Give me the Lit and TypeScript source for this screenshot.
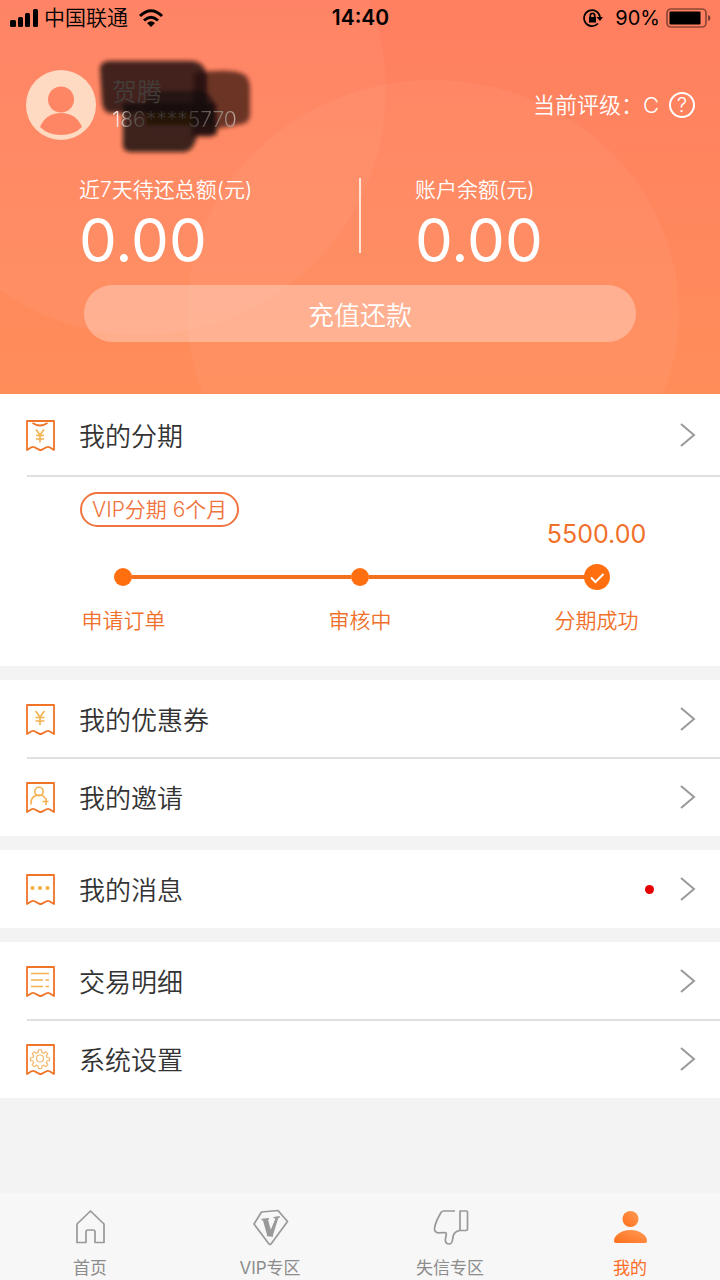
import { LitElement, html, svg, css, nothing } from "lit";
import { customElement, property } from "lit/decorators.js";
import { classMap } from "lit/directives/class-map.js";

const rowGlyphs = {
  installment: svg`<path class="edge" d="M7.500 4q7.500 5 15 0"/><path class="inner" d="M11 10.500l4 5.500 4-5.500M15 16v7.500M11 16.500h8M11 20h8"/>`,
  coupon: svg`<path class="inner" d="M10.500 8l4.500 6 4.500-6M15 14v8M10.500 14.500h9M10.500 18h9"/>`,
  invite: svg`<circle class="inner" cx="14" cy="10.500" r="4.200"/><path class="inner" d="M6 23.500v-1.500c0-9 12-10 14-4.500M21 17v7M17.500 20.500h6"/>`,
  message: svg`<g class="dots"><circle cx="7.500" cy="15" r="2"/><circle cx="15" cy="15" r="2"/><circle cx="22.500" cy="15" r="2"/></g>`,
  ledger: svg`<path class="inner" d="M6 8.500h18M6 15h12M20.500 15h3.500M6 21.500h12M20.500 21.500h3.500"/>`,
  settings: svg`<circle class="thin" cx="15" cy="15.500" r="3.500"/><path class="thin" d="M13.500 7h3l.5 2.500 1.700.7 2.100-1.500 2 2-1.500 2.100.7 1.700 2.500.5v2.500l-2.500.5-.7 1.700 1.500 2.100-2 2-2.100-1.500-1.700.7-.5 2.500h-3l-.5-2.500-1.700-.7-2.100 1.500-2-2 1.500-2.100-.7-1.700-2.500-.5v-2.500l2.500-.5.7-1.700-1.500-2.100 2-2 2.100 1.500 1.700-.7z"/>`,
};

const tabGlyphs = {
  home: svg`<path d="M5 16 18.500 3 32 16v18.500h-9V24q0-2-2-2h-5q-2 0-2 2v10.500H5z"/>`,
  vip: svg`<path d="M9.500 4 26 2.500 35.500 13.500 19 36q-1 1-2 0L2 16z"/><path class="solid" d="M9.500 10.800l7.500-.8v1.500l-1 .3 2.800 10 4.700-11.300-2-.3V9l6.500-1-.3 1.500-1.500.7L21 27v1.700l-6-.4v-1.500l-4-14.300-1.500-.3z"/>`,
  credit: svg`<path d="M23 3H12q-2 0-3 1.500-5.500 9-6.500 16 0 4 4 4.300l6.500-.3q1.500 0 1.300 2l-1 5q0 4.500 3.700 4.500 3 0 3.500-4 .5-9 7.500-9.500h6q1.500 0 1.500-1.500V4q0-1-1-1h-6.500v19"/>`,
  mine: svg`<defs><linearGradient id="mineFill" x1="0" y1="1" x2="1" y2="0"><stop offset="0" stop-color="#ff6f1c"/><stop offset="1" stop-color="#ff9a55"/></linearGradient></defs><g class="mine"><circle cx="18.500" cy="11" r="8"/><path d="M2 33q0-4 4-7 5-4 12.500-4T31 26q4 3 4 7 0 2-2 2H4q-2 0-2-2z"/></g>`,
};

@customElement("menu-row")
class MenuRow extends LitElement {
  @property() label = "";
  @property() icon = "coupon";
  @property({ type: Boolean }) unread = false;
  @property({ type: Boolean, reflect: true }) divided = false;

  static styles = css`
    :host { display: block; position: relative; }
    :host([divided])::after {
      content: ""; position: absolute; left: 27px; right: 0; bottom: -1px;
      height: 2px; background: #e0e0e0;
    }
    .row {
      display: flex; align-items: center; box-sizing: border-box;
      min-height: 78px; padding: 0 24px 0 25px;
      color: #333; text-decoration: none;
    }
    .glyph { width: 30px; height: 32px; flex: none; fill: none; }
    .edge { stroke: #f07428; stroke-width: 1.800; stroke-linejoin: round; }
    .inner { stroke: #f5b04c; stroke-width: 1.600; }
    .thin { stroke: #f5b76a; stroke-width: 1.200; }
    .dots { fill: #f5ab3d; }
    .label { flex: 1; margin-left: 24px; padding-top: 3px; font-size: 26px; line-height: 36px; }
    .unread { width: 9px; height: 9px; border-radius: 50%; background: #e60000; margin-right: 25px; }
    .chevron { width: 17px; height: 26px; fill: none; stroke: #999; stroke-width: 2; }
  `;

  render() {
    return html`<a class="row" href="#${this.icon}">
      <svg class="glyph" viewBox="0 0 30 32" aria-hidden="true">
        <path class="edge" d="M2 2h27v29l-4.500-2.700q-1.500-.8-3 0L17 30.600q-1.500.8-3 0l-4.500-2.300q-1.500-.8-3 0L2 31z"/>
        ${rowGlyphs[this.icon]}
      </svg>
      <span class="label">${this.label}</span>
      ${this.unread ? html`<span class="unread" role="img" aria-label="未读"></span>` : nothing}
      <svg class="chevron" viewBox="0 0 17 26" aria-hidden="true"><path d="M2 2l13 11L2 24"/></svg>
    </a>`;
  }
}

@customElement("status-bar")
class StatusBar extends LitElement {
  static styles = css`
    :host {
      display: grid; grid-template-columns: 1fr auto 1fr; align-items: center;
      height: 36px; padding: 0 9px 0 10px; color: #000; font-size: 20px; line-height: 36px;
    }
    .side { display: flex; align-items: center; }
    .end { justify-content: flex-end; }
    .carrier { font-size: 21px; margin: 0 10px 0 6px; }
    .time { font-size: 21px; font-weight: 600; }
    .percent { margin: 0 6px 0 12px; font-weight: 400; }
    svg { display: block; }
  `;

  render() {
    return html`
      <div class="side">
        <svg width="28" height="18" viewBox="0 0 28 18" aria-hidden="true">
          <rect x="0" y="11" width="6" height="7" rx="1.500"/><rect x="8" y="8" width="5" height="10" rx="1.500"/>
          <rect x="15" y="4" width="5" height="14" rx="1.500"/><rect x="23" y="0" width="5" height="18" rx="1.500"/>
        </svg>
        <span class="carrier">中国联通</span>
        <svg width="26" height="18" viewBox="0 0 26 18" fill="none" stroke="#000" stroke-width="3" aria-hidden="true">
          <path d="M2 7Q13-3.500 24 7M6 11.500q7-6.500 14 0"/><path d="M9 14q4-3.500 8 0l-4 4z" fill="#000" stroke="none"/>
        </svg>
      </div>
      <span class="time">14:40</span>
      <div class="side end">
        <svg width="20" height="18" viewBox="0 0 20 18" fill="none" stroke="#000" stroke-width="1.700" aria-hidden="true">
          <path d="M15 14.500A8 8 0 1 1 17 8"/><path d="M13.500 8H20l-3 4z" fill="#000" stroke="none"/>
          <rect x="6" y="8" width="7" height="5.500" fill="#000" stroke="none"/><path d="M7.300 8V6.500a2.200 2.200 0 0 1 4.400 0V8"/>
        </svg>
        <span class="percent">90%</span>
        <svg width="45" height="20" viewBox="0 0 45 20" aria-hidden="true">
          <rect x="1" y="1" width="39" height="18" rx="4" fill="none" stroke="#000" stroke-opacity=".45" stroke-width="1.700"/>
          <rect x="3.500" y="3.500" width="31" height="13" rx="1"/><path d="M42 7q2.500.5 2.500 3T42 13z" fill-opacity=".5"/>
        </svg>
      </div>`;
  }
}

@customElement("app-root")
class AppRoot extends LitElement {
  static styles = css`
    :host {
      display: flex; flex-direction: column; min-height: 100vh; background: #f3f3f3; color: #333;
      font-family: Inter, "Noto Sans CJK SC", sans-serif; font-weight: 350;
    }
    .hero {
      position: relative; overflow: hidden; color: #fff; padding-bottom: 52px;
      background: linear-gradient(#ff7f61, #ff8d5a);
    }
    .rings { position: absolute; inset: 0; width: 100%; height: 100%; fill: #fff; fill-opacity: .045; }
    .front { position: relative; }
    .profile { display: flex; align-items: center; padding: 34px 25px 0 26px; }
    .avatar { display: block; width: 70px; height: 70px; }
    .identity { position: relative; margin-left: 16px; flex: 1; }
    .name { position: relative; font-size: 25px; line-height: 30px; color: #433d3b; }
    .phone {
      position: relative; width: max-content; font-size: 21px; line-height: 26px; color: transparent;
      background: linear-gradient(90deg, #f4e4dc 6%, #6b5d58 14%, #3a3230 30%, #3a3230 60%, #6e605c 78%, #c0a8a0);
      background-clip: text; -webkit-background-clip: text;
    }
    .scribble { position: absolute; left: -16px; top: -20px; width: 164px; height: 106px; }
    .grade { display: flex; align-items: center; font-size: 22px; line-height: 30px; }
    .help {
      width: 26px; height: 26px; margin-left: 10px; padding: 0; border: 2px solid #fff; border-radius: 50%;
      background: none; color: #fff; font: inherit; font-size: 20px; line-height: 22px;
    }
    .totals { display: grid; grid-template-columns: 280px 2px 1fr; padding: 34px 25px 0 79px; }
    .total { display: flex; flex-direction: column; }
    .split { background: #ffe4d8; height: 75px; margin-top: 4px; }
    .split + .total { padding-left: 54px; }
    .caption { font-size: 21px; line-height: 32px; }
    .sum { font-size: 60px; line-height: 68px; font-weight: 400; }
    .repay {
      display: block; width: calc(100% - 168px); height: 57px; margin: 11px auto 0; border: 0; border-radius: 29px;
      background: rgba(255, 255, 255, .3); color: #fff; font: inherit; font-size: 26px; line-height: 57px; padding: 2px 0 0;
    }
    .card { background: #fff; }
    .card + .card { margin-top: 14px; }
    .lead { display: block; padding: 2px 0; }
    .plan { padding: 16px 80px 30px; color: #f0702a; }
    .badge {
      display: inline-block; box-sizing: border-box; height: 35px; padding: 0 10px; border: 2px solid #ef7440;
      border-radius: 18px; font-size: 21px; line-height: 32px; color: #ef7440;
    }
    .steps { display: grid; grid-template-columns: 87px 1fr 87px; margin: -10px 0 0; padding: 0; list-style: none; }
    .amount { grid-column: 3; justify-self: center; font-size: 25px; line-height: 34px; font-weight: 400; }
    .track { display: flex; align-items: center; grid-column: 1 / -1; padding: 13px 30px 0 34px; height: 26px; }
    .dot { width: 18px; height: 18px; border-radius: 50%; background: #ff6f10; }
    .bar { flex: 1; height: 4px; background: #f4701f; }
    .done { display: block; width: 26px; height: 26px; margin-left: -4px; }
    .step { text-align: center; font-size: 21px; line-height: 30px; margin-top: 16px; white-space: nowrap; }
    .tabs {
      display: grid; grid-template-columns: repeat(4, 1fr); margin-top: auto; height: 87px; background: #f7f7f7;
    }
    .tab {
      display: flex; flex-direction: column; align-items: center; padding-top: 15px;
      color: #8c8c8c; font-size: 17px; line-height: 24px; font-weight: 400; text-decoration: none;
    }
    .tab svg { width: 37px; height: 38px; margin-bottom: 10px; fill: none; stroke: #999; stroke-width: 1.700; stroke-linejoin: round; }
    .tab .solid { fill: #999; stroke: none; }
    .mine { fill: url(#mineFill); stroke: none; }
    .tab.current { color: #ff6c25; }
  `;

  private tabs = [
    { id: "home", label: "首页" },
    { id: "vip", label: "VIP专区" },
    { id: "credit", label: "失信专区" },
    { id: "mine", label: "我的" },
  ];

  render() {
    return html`
      <header class="hero">
        <svg class="rings" viewBox="0 0 720 394" preserveAspectRatio="xMidYMin slice" aria-hidden="true">
          <circle cx="141" cy="90" r="245"/><ellipse cx="433" cy="312" rx="246" ry="232"/>
        </svg>
        <div class="front">
          <status-bar></status-bar>
          <div class="profile">
            <svg class="avatar" viewBox="0 0 70 70" role="img" aria-label="头像">
              <circle cx="35" cy="35" r="35" fill="#ffdac2"/><circle cx="35" cy="29.500" r="13" fill="#ff8665"/>
              <path d="M14 57q6-14 21-14t21 14q-8 8-21 8t-21-8z" fill="#ff8665"/>
            </svg>
            <div class="identity">
              <svg class="scribble" viewBox="0 0 164 106" aria-hidden="true">
                <defs><filter id="soft" x="-10%" y="-10%" width="120%" height="120%"><feGaussianBlur stdDeviation="2"/></filter></defs>
                <g filter="url(#soft)">
                  <path d="M98 16 Q134 11 147 17 Q154 20 154 32V58Q153 66 146 67L120 72 116 80H96z" fill="#3c160e" fill-opacity=".76"/>
                  <path d="M12 4H96Q109 5 111 20V56H12Q6 52 6 44L4 12Q4 5 12 4z" fill="#1e0e0a" fill-opacity=".84"/>
                  <path d="M27 46H106L120 46 121 78H101Q98 94 88 95H34Q25 94 27 84z" fill="#170b08" fill-opacity=".84"/>
                  <path d="M60 34H106Q118 38 118 50V68H50V40z" fill="#120907" fill-opacity=".6"/>
                </g>
              </svg>
              <div class="name">贺腾</div>
              <div class="phone">186****5770</div>
            </div>
            <div class="grade"><span>当前评级：C</span><button class="help" aria-label="评级说明">?</button></div>
          </div>
          <div class="totals">
            <div class="total"><span class="caption">近7天待还总额(元)</span><span class="sum">0.00</span></div>
            <div class="split"></div>
            <div class="total"><span class="caption">账户余额(元)</span><span class="sum">0.00</span></div>
          </div>
          <button class="repay">充值还款</button>
        </div>
      </header>
      <main>
        <section class="card">
          <menu-row class="lead" icon="installment" label="我的分期" divided></menu-row>
          <div class="plan">
            <span class="badge">VIP分期 6个月</span>
            <div class="steps">
              <span class="amount">5500.00</span>
              <div class="track">
                <span class="dot"></span><span class="bar"></span><span class="dot"></span><span class="bar"></span>
                <svg class="done" viewBox="0 0 26 26" aria-hidden="true"><circle cx="13" cy="13" r="13" fill="#ff6f10"/><path d="M7 13.500l4.500 4.500 8-8" fill="none" stroke="#fff" stroke-width="2"/></svg>
              </div>
              <span class="step">申请订单</span><span class="step">审核中</span><span class="step">分期成功</span>
            </div>
          </div>
        </section>
        <section class="card">
          <menu-row icon="coupon" label="我的优惠券" divided></menu-row>
          <menu-row icon="invite" label="我的邀请"></menu-row>
        </section>
        <section class="card"><menu-row icon="message" label="我的消息" unread></menu-row></section>
        <section class="card">
          <menu-row icon="ledger" label="交易明细" divided></menu-row>
          <menu-row icon="settings" label="系统设置"></menu-row>
        </section>
      </main>
      <nav class="tabs">
        ${this.tabs.map((t) => html`<a class=${classMap({ tab: true, current: t.id === "mine" })} href="#${t.id}">
          <svg viewBox="0 0 37 38" aria-hidden="true">${tabGlyphs[t.id]}</svg>${t.label}</a>`)}
      </nav>`;
  }
}
